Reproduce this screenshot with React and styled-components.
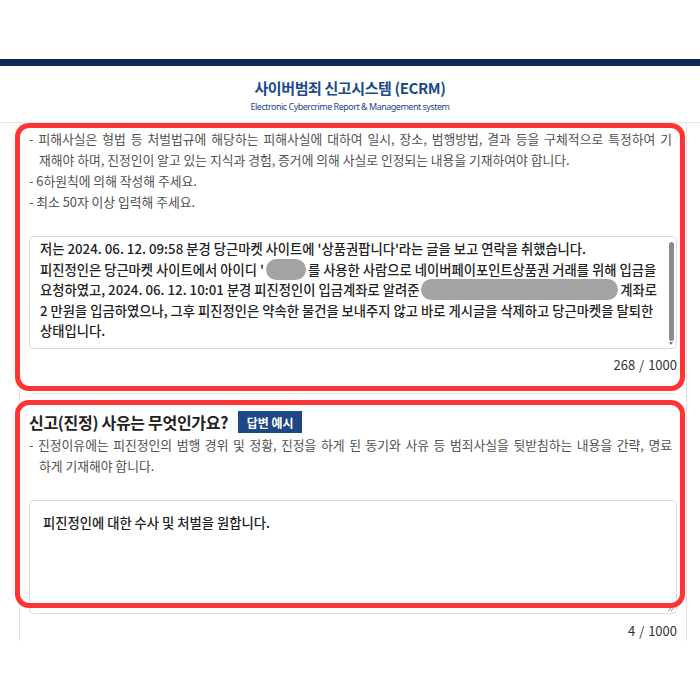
import styled, { createGlobalStyle } from 'styled-components';

const GlobalStyle = createGlobalStyle`
	* {
		box-sizing: border-box;
	}
	body {
		margin: 0;
		background: #ffffff;
		font-family: 'Noto Sans CJK KR', 'Noto Sans', sans-serif;
		color: #222;
	}
`;

const Page = styled.div`
	width: 700px;
	min-height: 700px;
	background: #fff;
	padding-top: 59px;
`;

const NavBar = styled.div`
	height: 7px;
	background: #0f2b55;
`;

const Header = styled.header`
	height: 57px;
	border-bottom: 1px solid #e6e6e6;
	display: flex;
	flex-direction: column;
	align-items: center;
	justify-content: center;
	padding-top: 2px;
	color: #1b4a8c;
`;

const Title = styled.h1`
	margin: 0;
	font-size: 15px;
	line-height: 20px;
	font-weight: 700;
	letter-spacing: -0.4px;
`;

const Subtitle = styled.div`
	font-family: 'Noto Sans', sans-serif;
	font-size: 9px;
	line-height: 12px;
	letter-spacing: -0.5px;
	margin-top: 3px;
`;

const Card = styled.main`
	width: 668px;
	margin-left: 19px;
	border-left: 1px solid #e3e3e3;
	border-right: 1px solid #e3e3e3;
	padding: 0 9px 0 9px;
`;

const Section = styled.section`
	position: relative;
	padding: ${(p) => p.$pad};
	border-bottom: ${(p) => (p.$last ? 'none' : '1px solid #e8e8e8')};
`;

// red annotation frame drawn over the section
const Highlight = styled.div`
	position: absolute;
	z-index: 2;
	left: -14px;
	right: -8px;
	top: ${(p) => p.$top}px;
	bottom: ${(p) => p.$bottom}px;
	border: 5px solid #ff3333;
	border-radius: 14px;
	pointer-events: none;
`;

const HeadingRow = styled.div`
	display: flex;
	align-items: center;
	gap: 10px;
	height: 22px;
`;

const Heading = styled.h2`
	margin: 0;
	font-size: 16px;
	font-weight: 700;
	letter-spacing: -0.3px;
	color: #222;
`;

const ExampleButton = styled.button`
	height: 22px;
	width: 64px;
	border: none;
	background: #1d4785;
	color: #fff;
	font-family: inherit;
	font-size: 12px;
	font-weight: 700;
	padding: 0;
`;

const Guide = styled.ul`
	list-style: none;
	margin: ${(p) => p.$margin || '0'};
	padding: 0 5px 0 0;
	color: #505050;
	font-size: 12.8px;
	line-height: 21px;
	white-space: nowrap;
`;

const GuideItem = styled.li`
	padding-left: 10px;
`;

// one visual line of a guide item; wrapped lines are justified like the source paragraph
const GuideLine = styled.span`
	display: block;
	margin-left: ${(p) => (p.$lead ? '-10px' : '0')};
	text-align: ${(p) => (p.$wrap ? 'justify' : 'left')};
	text-align-last: ${(p) => (p.$wrap ? 'justify' : 'auto')};
`;

const TextBox = styled.div`
	position: relative;
	display: flex;
	height: ${(p) => p.$height}px;
	margin-top: ${(p) => p.$mt}px;
	border: 1px solid #dcdcdc;
	border-radius: 4px;
	background: #fff;
`;

const BoxText = styled.div`
	flex: 1;
	padding: ${(p) => p.$pad};
	font-size: 13.3px;
	line-height: 20.5px;
	font-weight: 500;
	color: #222;
	white-space: nowrap;
	overflow: hidden;
`;

const Redacted = styled.span`
	display: inline-block;
	vertical-align: middle;
	width: ${(p) => p.$w}px;
	height: 21px;
	margin: -3px 2px 0;
	border-radius: 11px;
	background: #a3a3a3;
`;

const ScrollTrack = styled.div`
	width: 9px;
	padding: 5px 2px 3px 1px;
	display: flex;
	flex-direction: column;
	align-items: center;
`;

const ScrollThumb = styled.div`
	flex: 1;
	width: 5px;
	border-radius: 3px;
	background: #8c8c8c;
`;

const ScrollArrow = styled.div`
	width: 0;
	height: 0;
	margin-top: 1px;
	border-left: 2px solid transparent;
	border-right: 2px solid transparent;
	border-top: 3px solid #777;
`;

const Grip = styled.svg`
	position: absolute;
	right: 1px;
	bottom: 1px;
`;

const Counter = styled.div`
	margin-top: ${(p) => p.$mt}px;
	text-align: right;
	font-size: 13px;
	line-height: 20px;
	word-spacing: 1px;
	color: #333;
`;

export default function App() {
	return (
		<>
			<GlobalStyle />
			<Page>
				<NavBar />
				<Header>
					<Title>사이버범죄 신고시스템 (ECRM)</Title>
					<Subtitle>Electronic Cybercrime Report &amp; Management system</Subtitle>
				</Header>
				<Card>
					<Section $pad="5px 0 18px">
						<Highlight $top={0} $bottom={2} />
						<Guide>
							<GuideItem>
								<GuideLine $lead $wrap>
									- 피해사실은 형법 등 처벌법규에 해당하는 피해사실에 대하여 일시, 장소, 범행방법, 결과 등을 구체적으로 특정하여 기
								</GuideLine>
								<GuideLine>
									재해야 하며, 진정인이 알고 있는 지식과 경험, 증거에 의해 사실로 인정되는 내용을 기재하여야 합니다.
								</GuideLine>
							</GuideItem>
							<GuideItem>
								<GuideLine $lead>- 6하원칙에 의해 작성해 주세요.</GuideLine>
							</GuideItem>
							<GuideItem>
								<GuideLine $lead>- 최소 50자 이상 입력해 주세요.</GuideLine>
							</GuideItem>
						</Guide>
						<TextBox $height={113} $mt={24}>
							<BoxText $pad="2px 6px 0 10px">
								저는 2024. 06. 12. 09:58 분경 당근마켓 사이트에 '상품권팝니다'라는 글을 보고 연락을 취했습니다.
								<br />
								피진정인은 당근마켓 사이트에서 아이디 '<Redacted $w={40} />를 사용한 사람으로 네이버페이포인트상품권 거래를 위해 입금을
								<br />
								요청하였고, 2024. 06. 12. 10:01 분경 피진정인이 입금계좌로 알려준
								<Redacted $w={197} />
								계좌로
								<br />
								2 만원을 입금하였으나, 그후 피진정인은 약속한 물건을 보내주지 않고 바로 게시글을 삭제하고 당근마켓을 탈퇴한
								<br />
								상태입니다.
							</BoxText>
							<ScrollTrack>
								<ScrollThumb />
								<ScrollArrow />
							</ScrollTrack>
						</TextBox>
						<Counter $mt={6}>268 / 1000</Counter>
					</Section>

					<Section $pad="17px 0 0" $last>
						<Highlight $top={6} $bottom={33} />
						<HeadingRow>
							<Heading>신고(진정) 사유는 무엇인가요?</Heading>
							<ExampleButton>답변 예시</ExampleButton>
						</HeadingRow>
						<Guide $margin="1px 0 0">
							<GuideItem>
								<GuideLine $lead $wrap>
									- 진정이유에는 피진정인의 범행 경위 및 정황, 진정을 하게 된 동기와 사유 등 범죄사실을 뒷받침하는 내용을 간략, 명료
								</GuideLine>
								<GuideLine>하게 기재해야 합니다.</GuideLine>
							</GuideItem>
						</Guide>
						<TextBox $height={114} $mt={24}>
							<BoxText $pad="12px 13px 0 13px">피진정인에 대한 수사 및 처벌을 원합니다.</BoxText>
							<Grip width="9" height="9" viewBox="0 0 9 9">
								<path d="M8 2 L2 8 M8 5 L5 8" stroke="#888" strokeWidth="1" />
							</Grip>
						</TextBox>
						<Counter $mt={7}>4 / 1000</Counter>
					</Section>
				</Card>
			</Page>
		</>
	);
}
